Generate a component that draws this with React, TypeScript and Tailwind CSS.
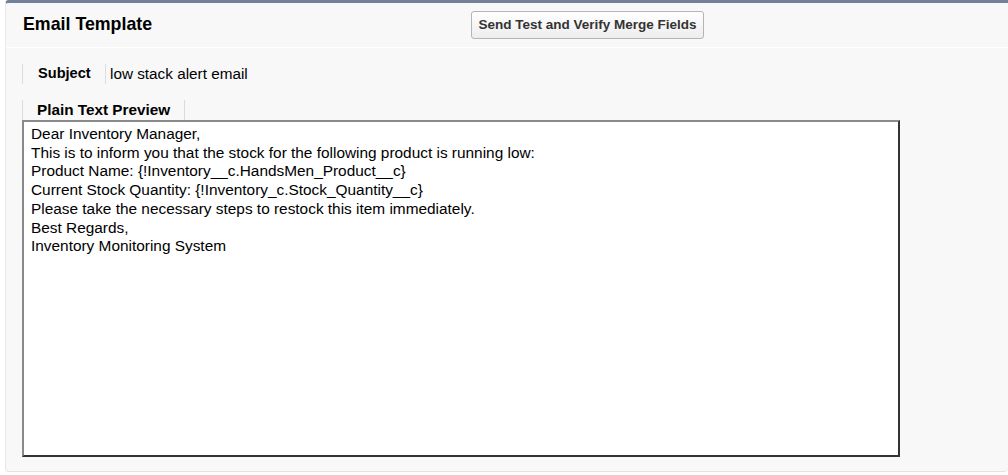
// Email template detail block, Salesforce Classic look.

const bodyLines = [
  "Dear Inventory Manager,",
  "This is to inform you that the stock for the following product is running low:",
  "Product Name: {!Inventory__c.HandsMen_Product__c}",
  "Current Stock Quantity: {!Inventory_c.Stock_Quantity__c}",
  "Please take the necessary steps to restock this item immediately.",
  "Best Regards,",
  "Inventory Monitoring System",
];

export default function App() {
  return (
    <div className="h-[475px] w-full bg-white pl-[5px] font-['Liberation_Sans',Arial,sans-serif] text-black">
      <div className="h-[472px] rounded-tl-[4px] rounded-b-[4px] border-t-[3px] border-l border-b border-t-[#738099] border-l-[#e8e8e8] border-b-[#e3e3e3] bg-[#f8f8f8]">
        {/* header */}
        <div className="flex h-[45px] items-center border-b border-white">
          <h2 className="w-[465px] pl-[17px] text-[17.8px] font-bold leading-none">Email Template</h2>
          <button className="h-[28px] w-[233px] rounded-[3px] border border-[#b5b5b5] bg-gradient-to-b from-white to-[#ededed] text-[13.5px] font-bold text-[#333]">
            Send Test and Verify Merge Fields
          </button>
        </div>

        {/* subject */}
        <div className="ml-[16px] mt-[16px] flex h-[20px] items-center">
          <div className="flex h-full w-[84px] shrink-0 items-center border-r border-l border-[#dcdcdc] pl-[15px] text-[14.6px] font-bold">
            Subject
          </div>
          <div className="flex h-full items-center pl-[4px] text-[15.3px]">
            low stack alert email
          </div>
        </div>

        {/* plain text preview */}
        <div className="ml-[16px] mt-[16px]">
          <div className="flex h-[20px] w-[163px] items-center border-x border-[#dcdcdc] pl-[14px] text-[15.3px] font-bold">
            Plain Text Preview
          </div>
          <div className="h-[337px] w-[878px] border-2 border-t-[#8a8a8a] border-l-[#8a8a8a] border-r-[#333] border-b-[#333] bg-white px-[7px] pt-[3px] text-[15.4px] leading-[18.7px]">
            {bodyLines.map((line) => (
              <div key={line}>{line}</div>
            ))}
          </div>
        </div>
      </div>
    </div>
  );
}
